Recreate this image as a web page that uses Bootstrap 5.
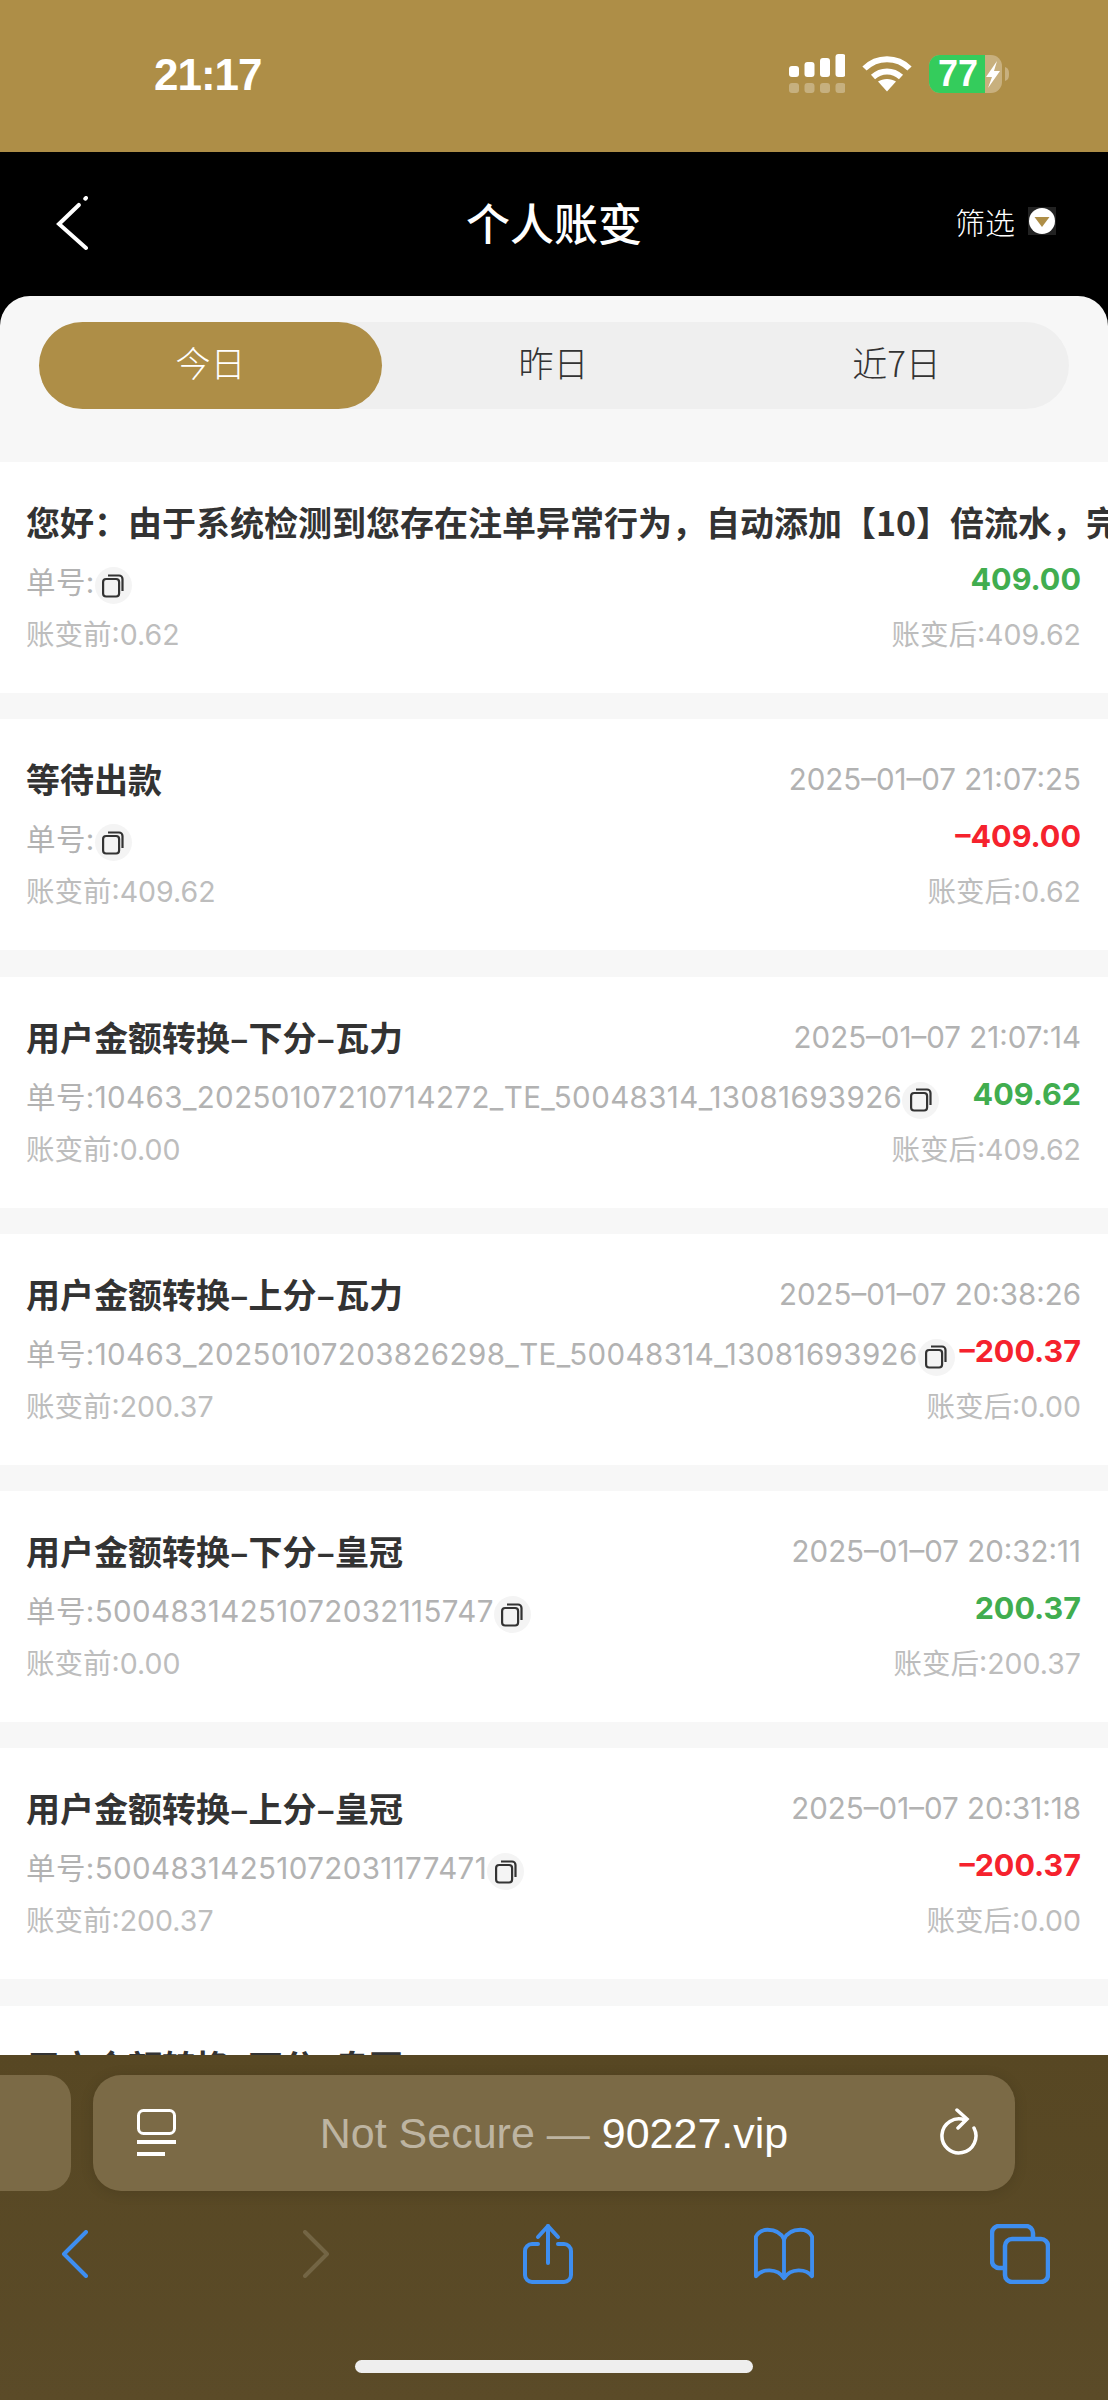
<!DOCTYPE html>
<html lang="zh-CN">
<head>
    <meta charset="UTF-8">
    <meta name="viewport" content="width=device-width, initial-scale=1.0">
    <title>个人账变</title>
    <link href="https://cdn.jsdelivr.net/npm/bootstrap@5.3.0/dist/css/bootstrap.min.css" rel="stylesheet">
    <style>
        html, body { margin: 0; background: #000; }
        body { font-family: "Inter", "Noto Sans CJK SC", sans-serif; }
        .phone { width: 1108px; height: 2400px; overflow: hidden; }
        .status-bar { height: 152px; flex: 0 0 auto; background: #ae8e47; color: #fff; }
        .clock { width: 262px; padding-left: 154px; padding-bottom: 2px; font-family: "Liberation Sans", sans-serif; font-size: 44px; font-weight: 700; line-height: 1; letter-spacing: -1px; }
        .status-icons { padding-right: 99px; padding-bottom: 5px; gap: 17px; }
        .top-bar { height: 144px; flex: 0 0 auto; background: #000; color: #fff; padding: 0 52px 0 52px; }
        .top-bar .page-title { font-size: 44px; font-weight: 500; font-family: "Noto Sans CJK SC", sans-serif; line-height: 1; margin-top: -4px; }
        .bar-side { flex: 1 1 0; }
        .filter-btn { font-size: 30px; font-family: "Noto Sans CJK SC", sans-serif; font-weight: 300; gap: 13px; line-height: 1; margin-top: -6px; }
        .panel { background: #f7f7f7; border-radius: 30px 30px 0 0; flex: 1 1 0; min-height: 0; overflow: hidden; }
        .day-tabs { margin: 26px 39px 53px; height: 87px; background: #efefef; border-radius: 44px; }
        .day-tab { width: 343px; height: 87px; padding-bottom: 7px; border-radius: 44px; color: #333; font-size: 35px; font-family: "Noto Sans CJK SC", sans-serif; font-weight: 300; }
        .day-tab.on { background: #ae8e47; color: #fff; }
        .record { height: 231px; background: #fff; margin-bottom: 26.300px; padding: 37px 27px 0 26px; }
        .record-title { font-family: "Noto Sans CJK SC", sans-serif; font-size: 34px; font-weight: 700; color: #333; line-height: 46px; white-space: nowrap; }
        .record-time { font-size: 29.500px; color: #b2b2b2; line-height: 46px; white-space: nowrap; margin-left: auto; }
        .order-row { height: 60px; margin-top: 7px; }
        .order-no { font-size: 29.500px; letter-spacing: .4px; color: #b2b2b2; white-space: nowrap; line-height: 60px; }
        .copy-dot { width: 37px; height: 37px; border-radius: 50%; background: #f4f4f4; flex: 0 0 auto; margin-top: 15px; }
        .amount { font-size: 30.500px; font-weight: 700; line-height: 54px; margin-left: auto; white-space: nowrap; }
        .amount.plus { color: #41ad4f; }
        .amount.minus { color: #f5222d; }
        .balance-row { font-size: 28.500px; color: #bdbdbd; line-height: 46px; }
        .browser-bar { height: 345px; flex: 0 0 auto; background: linear-gradient(#574723, #5b4b28); color: #fff; padding-top: 20px; }
        .tab-peek { width: 71px; height: 116px; background: #7b6a46; border-radius: 0 24px 24px 0; }
        .address-box { width: 922px; height: 116px; margin-left: 22px; background: #7b6a46; border-radius: 28px; padding: 0 36px 0 44px; box-shadow: 0 2px 14px rgba(0, 0, 0, .12); }
        .address-text { font-size: 43px; line-height: 1; margin-right: 8px; font-family: "Liberation Sans", sans-serif; }
        .address-text span { color: #bdb4a1; }
        .tool-row { padding: 32px 58px 0 45px; height: 100px; }
        .tool-slot { width: 60px; height: 62px; }
        .next-arrow { margin-left: 10px; }
        .home-line { width: 398px; height: 13px; border-radius: 7px; background: #eee; margin: 69px auto 0; }
    </style>
</head>
<body>
<div class="phone d-flex flex-column">

    <!-- barra de estado -->
    <div class="status-bar d-flex align-items-center justify-content-between">
        <div class="clock">21:17</div>
        <div class="status-icons d-flex align-items-center">
            <svg width="56" height="40" viewBox="0 0 56 40">
                <g fill="#fff">
                    <rect x="0" y="12" width="10" height="11" rx="3"/>
                    <rect x="15.500" y="8" width="10" height="15" rx="3"/>
                    <rect x="31" y="4" width="10" height="19" rx="3"/>
                    <rect x="46.500" y="0" width="10" height="23" rx="3"/>
                </g>
                <g fill="#fff" opacity=".3">
                    <rect x="0" y="29" width="10" height="10" rx="3"/>
                    <rect x="15.500" y="29" width="10" height="10" rx="3"/>
                    <rect x="31" y="29" width="10" height="10" rx="3"/>
                    <rect x="46.500" y="29" width="10" height="10" rx="3"/>
                </g>
            </svg>
            <svg width="50" height="37" viewBox="0 0 50 37">
                <g fill="none" stroke="#fff" stroke-width="6">
                    <path d="M2.500 13.500C15 1 35 1 47.500 13.500"/>
                    <path d="M11 22C19 14.500 31 14.500 39 22"/>
                </g>
                <path d="M16 26.500C21 23 29 23 34 26.500L25 36.500Z" fill="#fff"/>
            </svg>
            <svg width="80" height="38" viewBox="0 0 80 38">
                <rect x="0" y="0" width="73" height="38" rx="11" fill="#c8b07e"/>
                <path d="M11 0H56V38H11A11 11 0 0 1 0 27V11A11 11 0 0 1 11 0Z" fill="#34cc5c"/>
                <path d="M76 12C79 13 80 15 80 19C80 23 79 25 76 26Z" fill="#c8b07e"/>
                <text x="9" y="31" font-family="Liberation Sans, sans-serif" font-size="36" font-weight="700" fill="#fff">77</text>
                <path d="M68 6L57 22H63L59 33L71 16H65Z" fill="#fff"/>
            </svg>
        </div>
    </div>

    <!-- cabecera -->
    <div class="top-bar d-flex align-items-center justify-content-between">
        <div class="bar-side">
            <svg class="d-block" width="36" height="56" viewBox="0 0 36 56">
                <path d="M34 2L7 28L34 52" fill="none" stroke="#fff" stroke-width="4" stroke-linecap="round" stroke-dasharray="1 9 90"/>
            </svg>
        </div>
        <div class="page-title">个人账变</div>
        <div class="bar-side d-flex justify-content-end">
            <div class="filter-btn d-flex align-items-center">
                <span>筛选</span>
                <svg width="28" height="28" viewBox="0 0 28 28">
                    <rect width="28" height="28" fill="#222"/>
                    <circle cx="14" cy="14" r="13" fill="#fff"/>
                    <path d="M6.500 10H21.500L14 20Z" fill="#ae8e47"/>
                </svg>
            </div>
        </div>
    </div>

    <div class="panel">
        <div class="day-tabs d-flex">
            <div class="day-tab on d-flex align-items-center justify-content-center">今日</div>
            <div class="day-tab d-flex align-items-center justify-content-center">昨日</div>
            <div class="day-tab d-flex align-items-center justify-content-center">近7日</div>
        </div>

        <div id="records"></div>
    </div>

    <!-- barra del navegador -->
    <div class="browser-bar">
        <div class="d-flex">
            <div class="tab-peek"></div>
            <div class="address-box d-flex align-items-center justify-content-between">
                <svg width="40" height="48" viewBox="0 0 40 48" fill="none" stroke="#fff">
                    <rect x="1.500" y="1.500" width="36" height="23" rx="5" stroke-width="3"/>
                    <path d="M0 33H39" stroke-width="4"/>
                    <path d="M0 45H28" stroke-width="4"/>
                </svg>
                <div class="address-text"><span>Not Secure — </span>90227.vip</div>
                <svg width="40" height="50" viewBox="0 0 40 50" fill="none" stroke="#fff" stroke-width="3.500" stroke-linecap="round">
                    <path d="M26 12A17 17 0 1 0 35 20"/>
                    <path d="M18 2L28 11L19 20"/>
                </svg>
            </div>
        </div>

        <div class="tool-row d-flex justify-content-between">
            <div class="tool-slot d-flex align-items-center justify-content-center">
                <svg width="28" height="48" viewBox="0 0 28 48" fill="none" stroke="#3e8ef0" stroke-width="4" stroke-linecap="round" stroke-linejoin="round"><path d="M25 2L3 24L25 46"/></svg>
            </div>
            <div class="tool-slot d-flex align-items-center justify-content-center">
                <svg class="next-arrow" width="28" height="48" viewBox="0 0 28 48" fill="none" stroke="#736544" stroke-width="4" stroke-linecap="round" stroke-linejoin="round"><path d="M3 2L25 24L3 46"/></svg>
            </div>
            <div class="tool-slot d-flex align-items-center justify-content-center">
                <svg width="50" height="62" viewBox="0 0 50 62" fill="none" stroke="#3e8ef0" stroke-width="4" stroke-linecap="round" stroke-linejoin="round">
                    <path d="M15 21H9A7 7 0 0 0 2 28V52A7 7 0 0 0 9 59H41A7 7 0 0 0 48 52V28A7 7 0 0 0 41 21H35"/>
                    <path d="M25 40V3"/>
                    <path d="M15 14L25 3L35 14"/>
                </svg>
            </div>
            <div class="tool-slot d-flex align-items-center justify-content-center">
                <svg width="62" height="54" viewBox="0 0 62 54" fill="none" stroke="#3e8ef0" stroke-width="4" stroke-linejoin="round">
                    <path d="M31 12C28 5 22 2 14 2C8 2 4 5 2 9V50C8 42 24 41 31 52C38 41 54 42 60 50V9C58 5 54 2 48 2C40 2 34 5 31 12Z"/>
                    <path d="M31 12V50"/>
                </svg>
            </div>
            <div class="tool-slot d-flex align-items-center justify-content-center">
                <svg width="60" height="60" viewBox="0 0 60 60" fill="none" stroke="#3e8ef0" stroke-width="4.500">
                    <path d="M14 44H9A7 7 0 0 1 2 37V9A7 7 0 0 1 9 2H36A7 7 0 0 1 43 9V13"/>
                    <rect x="15" y="15" width="43" height="43" rx="7"/>
                </svg>
            </div>
        </div>

        <div class="home-line"></div>
    </div>
</div>

<script>
    // movimientos del día
    const registros = [
        { titulo: "您好：由于系统检测到您存在注单异常行为，自动添加【10】倍流水，完成流水后方可提款", hora: "", orden: "", monto: "409.00", antes: "0.62", despues: "409.62" },
        { titulo: "等待出款", hora: "2025–01–07 21:07:25", orden: "", monto: "–409.00", antes: "409.62", despues: "0.62" },
        { titulo: "用户金额转换–下分–瓦力", hora: "2025–01–07 21:07:14", orden: "10463_20250107210714272_TE_50048314_13081693926", monto: "409.62", antes: "0.00", despues: "409.62" },
        { titulo: "用户金额转换–上分–瓦力", hora: "2025–01–07 20:38:26", orden: "10463_20250107203826298_TE_50048314_13081693926", monto: "–200.37", antes: "200.37", despues: "0.00" },
        { titulo: "用户金额转换–下分–皇冠", hora: "2025–01–07 20:32:11", orden: "50048314251072032115747", monto: "200.37", antes: "0.00", despues: "200.37" },
        { titulo: "用户金额转换–上分–皇冠", hora: "2025–01–07 20:31:18", orden: "50048314251072031177471", monto: "–200.37", antes: "200.37", despues: "0.00" },
        { titulo: "用户金额转换–下分–皇冠", hora: "", orden: "", monto: "", antes: "", despues: "" }
    ];

    const iconoCopiar = `<svg width="22" height="24" viewBox="0 0 22 24" fill="none" stroke="#333" stroke-width="2.200">
        <rect x="1.100" y="5" width="16" height="17.500" rx="3"/>
        <path d="M6 1.500H17A3.500 3.500 0 0 1 20.500 5V17"/></svg>`;

    document.getElementById("records").innerHTML = registros.map(r => {
        const menos = r.monto.startsWith("–");
        return `<div class="record">
            <div class="d-flex">
                <div class="record-title">${r.titulo}</div>
                <div class="record-time">${r.hora}</div>
            </div>
            <div class="order-row d-flex align-items-start">
                <div class="order-no">单号:${r.orden}</div>
                <div class="copy-dot d-flex align-items-center justify-content-center">${iconoCopiar}</div>
                <div class="amount ${menos ? "minus" : "plus"}">${r.monto}</div>
            </div>
            <div class="balance-row d-flex justify-content-between">
                <span>账变前:${r.antes}</span><span>账变后:${r.despues}</span>
            </div>
        </div>`;
    }).join("");
</script>
<script src="https://cdn.jsdelivr.net/npm/bootstrap@5.3.0/dist/js/bootstrap.bundle.min.js"></script>
</body>
</html>
